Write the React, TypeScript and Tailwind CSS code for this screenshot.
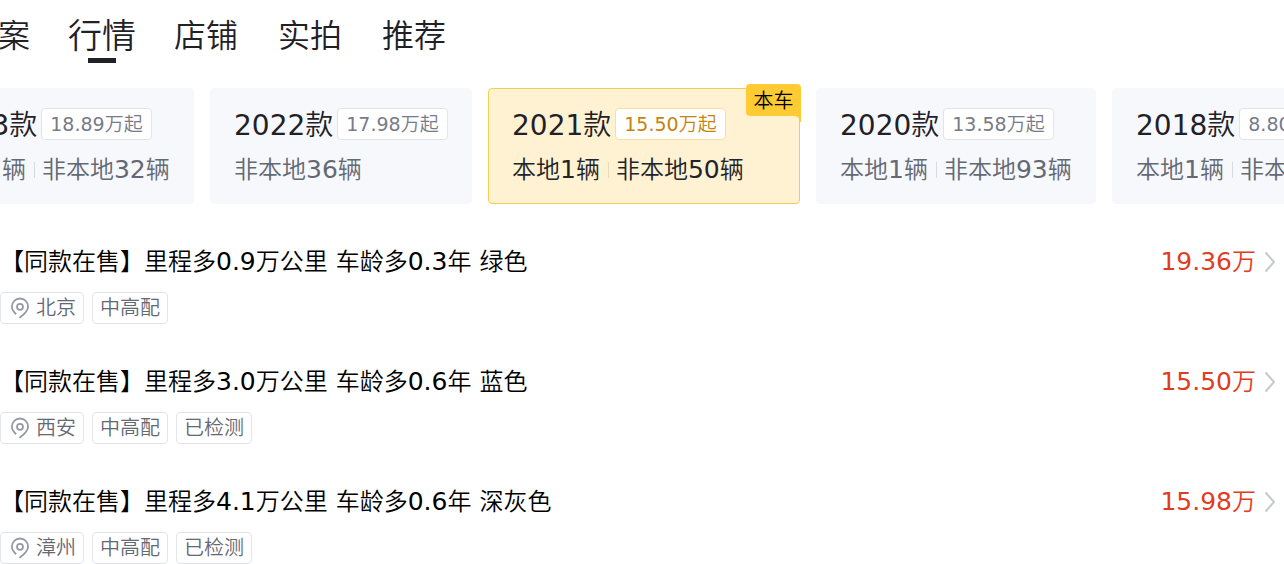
type Model = {
  year: string;
  price: string;
  counts: string[];
  width: string;
  current?: boolean;
};

const tabs = ['档案', '行情', '店铺', '实拍', '推荐'];

const models: Model[] = [
  { year: '2023款', price: '18.89万起', counts: ['本地1辆', '非本地32辆'], width: 'w-[280px]' },
  { year: '2022款', price: '17.98万起', counts: ['非本地36辆'], width: 'w-[262px]' },
  { year: '2021款', price: '15.50万起', counts: ['本地1辆', '非本地50辆'], width: 'w-[312px]', current: true },
  { year: '2020款', price: '13.58万起', counts: ['本地1辆', '非本地93辆'], width: 'w-[280px]' },
  { year: '2018款', price: '8.80万起', counts: ['本地1辆', '非本地20辆'], width: 'w-[280px]' },
];

const listings = [
  { title: '【同款在售】里程多0.9万公里 车龄多0.3年 绿色', price: '19.36万', city: '北京', tags: ['中高配'] },
  { title: '【同款在售】里程多3.0万公里 车龄多0.6年 蓝色', price: '15.50万', city: '西安', tags: ['中高配', '已检测'] },
  { title: '【同款在售】里程多4.1万公里 车龄多0.6年 深灰色', price: '15.98万', city: '漳州', tags: ['中高配', '已检测'] },
];

/** Sets the figures in a line of text slightly larger than the characters around them. */
function Figures({ text }: { text: string }) {
  return (
    <span>
      {text.split(/([\d. ]+)/).map((part, i) =>
        i % 2 ? (
          <span key={i} className="text-[25px]">
            {part}
          </span>
        ) : (
          part
        ),
      )}
    </span>
  );
}

function PinIcon() {
  return (
    <svg className="h-6 w-5 shrink-0" viewBox="0 0 20 24" fill="none" stroke="#9599a8" strokeWidth="1.8" aria-hidden="true">
      <path d="M9.2 21.8L10.2 21.2C14.8 18 18.1 14.6 18.1 10.6A8.1 8.1 0 0 0 1.9 10.6C1.9 13.4 3.4 15.8 6.2 18.2" />
      <circle cx="10" cy="10.8" r="3" />
    </svg>
  );
}

function ChevronIcon() {
  return (
    <svg className="h-6 w-3 shrink-0" viewBox="0 0 12 24" fill="none" stroke="#c6c8d0" strokeWidth="2" aria-hidden="true">
      <path d="M1.5 2.5L10 12L1.5 21.5" />
    </svg>
  );
}

function ModelCard({ model }: { model: Model }) {
  const { current } = model;
  return (
    <button
      type="button"
      className={`relative h-[116px] shrink-0 rounded border pl-[23px] text-left whitespace-nowrap ${model.width} ${
        current ? 'border-[#f2cf52] bg-[#fff2d3] text-[#222329]' : 'border-[#f6f8fc] bg-[#f6f8fc] text-[#646873]'
      }`}
    >
      {current && (
        <span className="absolute -top-[5px] -right-[2px] flex h-8 w-[55px] items-center justify-center rounded rounded-br-none bg-[#ffcb32] pt-[2px] text-[20px] text-black">
          本车
          <svg className="absolute top-full right-0 h-[6px] w-[6px]" viewBox="0 0 6 6" fill="#ffcb32" aria-hidden="true">
            <path d="M0 0H6V6H5C5 2.5 3.5 0.5 0 0Z" />
          </svg>
        </span>
      )}
      <span className="flex items-center gap-1">
        <span className="pt-1 text-[28px] leading-9 text-[#1f2126]">{model.year}</span>
        <span
          className={`flex h-8 items-center rounded border bg-white px-2 text-[19px] ${
            current ? 'border-[#f7df9c] text-[#c4840d]' : 'border-[#e2e4ea] text-[#777b88]'
          }`}
        >
          {model.price}
        </span>
      </span>
      <span className="mt-2 flex items-center text-[24px] leading-9">
        {model.counts.map((count, i) => (
          <span key={count} className="flex items-center">
            {i > 0 && <span className={`mr-[7px] ml-2 h-4 w-px ${current ? 'bg-[#e6dabd]' : 'bg-[#d6d9e0]'}`} />}
            <Figures text={count} />
          </span>
        ))}
      </span>
    </button>
  );
}

export default function App() {
  return (
    <div className="overflow-hidden bg-white font-['DejaVu_Sans','Noto_Sans_CJK_SC_DemiLight','Noto_Sans_CJK_SC',sans-serif]">
      <nav className="-ml-[54px] flex h-[88px] items-start pt-[14px]">
        {tabs.map((tab) => (
          <a
            key={tab}
            href={`#${tab}`}
            className={`flex w-[104px] shrink-0 flex-col items-center leading-[44px] text-[#1f2126] ${
              tab === '行情' ? 'text-[34px]' : 'text-[32px]'
            }`}
          >
            {tab}
            {tab === '行情' && <span className="h-[5px] w-7 bg-[#1f2126]" />}
          </a>
        ))}
      </nav>

      <section className="-ml-[86px] flex gap-4">
        {models.map((model) => (
          <ModelCard key={model.year} model={model} />
        ))}
      </section>

      <ul className="mt-10">
        {listings.map((item) => (
          <li key={item.title} className="mb-10 last:mb-0">
            <a href={`#${item.city}`} className="block">
              <span className="flex h-9 items-center pr-2 text-[24px] leading-9">
                <span className="flex-1 text-black">
                  <Figures text={item.title} />
                </span>
                <span className="mr-2 text-[#e03c1f]">
                  <Figures text={item.price} />
                </span>
                <ChevronIcon />
              </span>
              <span className="mt-3 flex gap-2 text-[20px] text-[#646873]">
                <span className="flex h-8 items-center rounded border border-[#e2e4ea] pr-[7px] pl-[9px]">
                  <PinIcon />
                  <span className="ml-[6px]">{item.city}</span>
                </span>
                {item.tags.map((tag) => (
                  <span key={tag} className="flex h-8 items-center rounded border border-[#e2e4ea] px-[7px]">
                    {tag}
                  </span>
                ))}
              </span>
            </a>
          </li>
        ))}
      </ul>
    </div>
  );
}
